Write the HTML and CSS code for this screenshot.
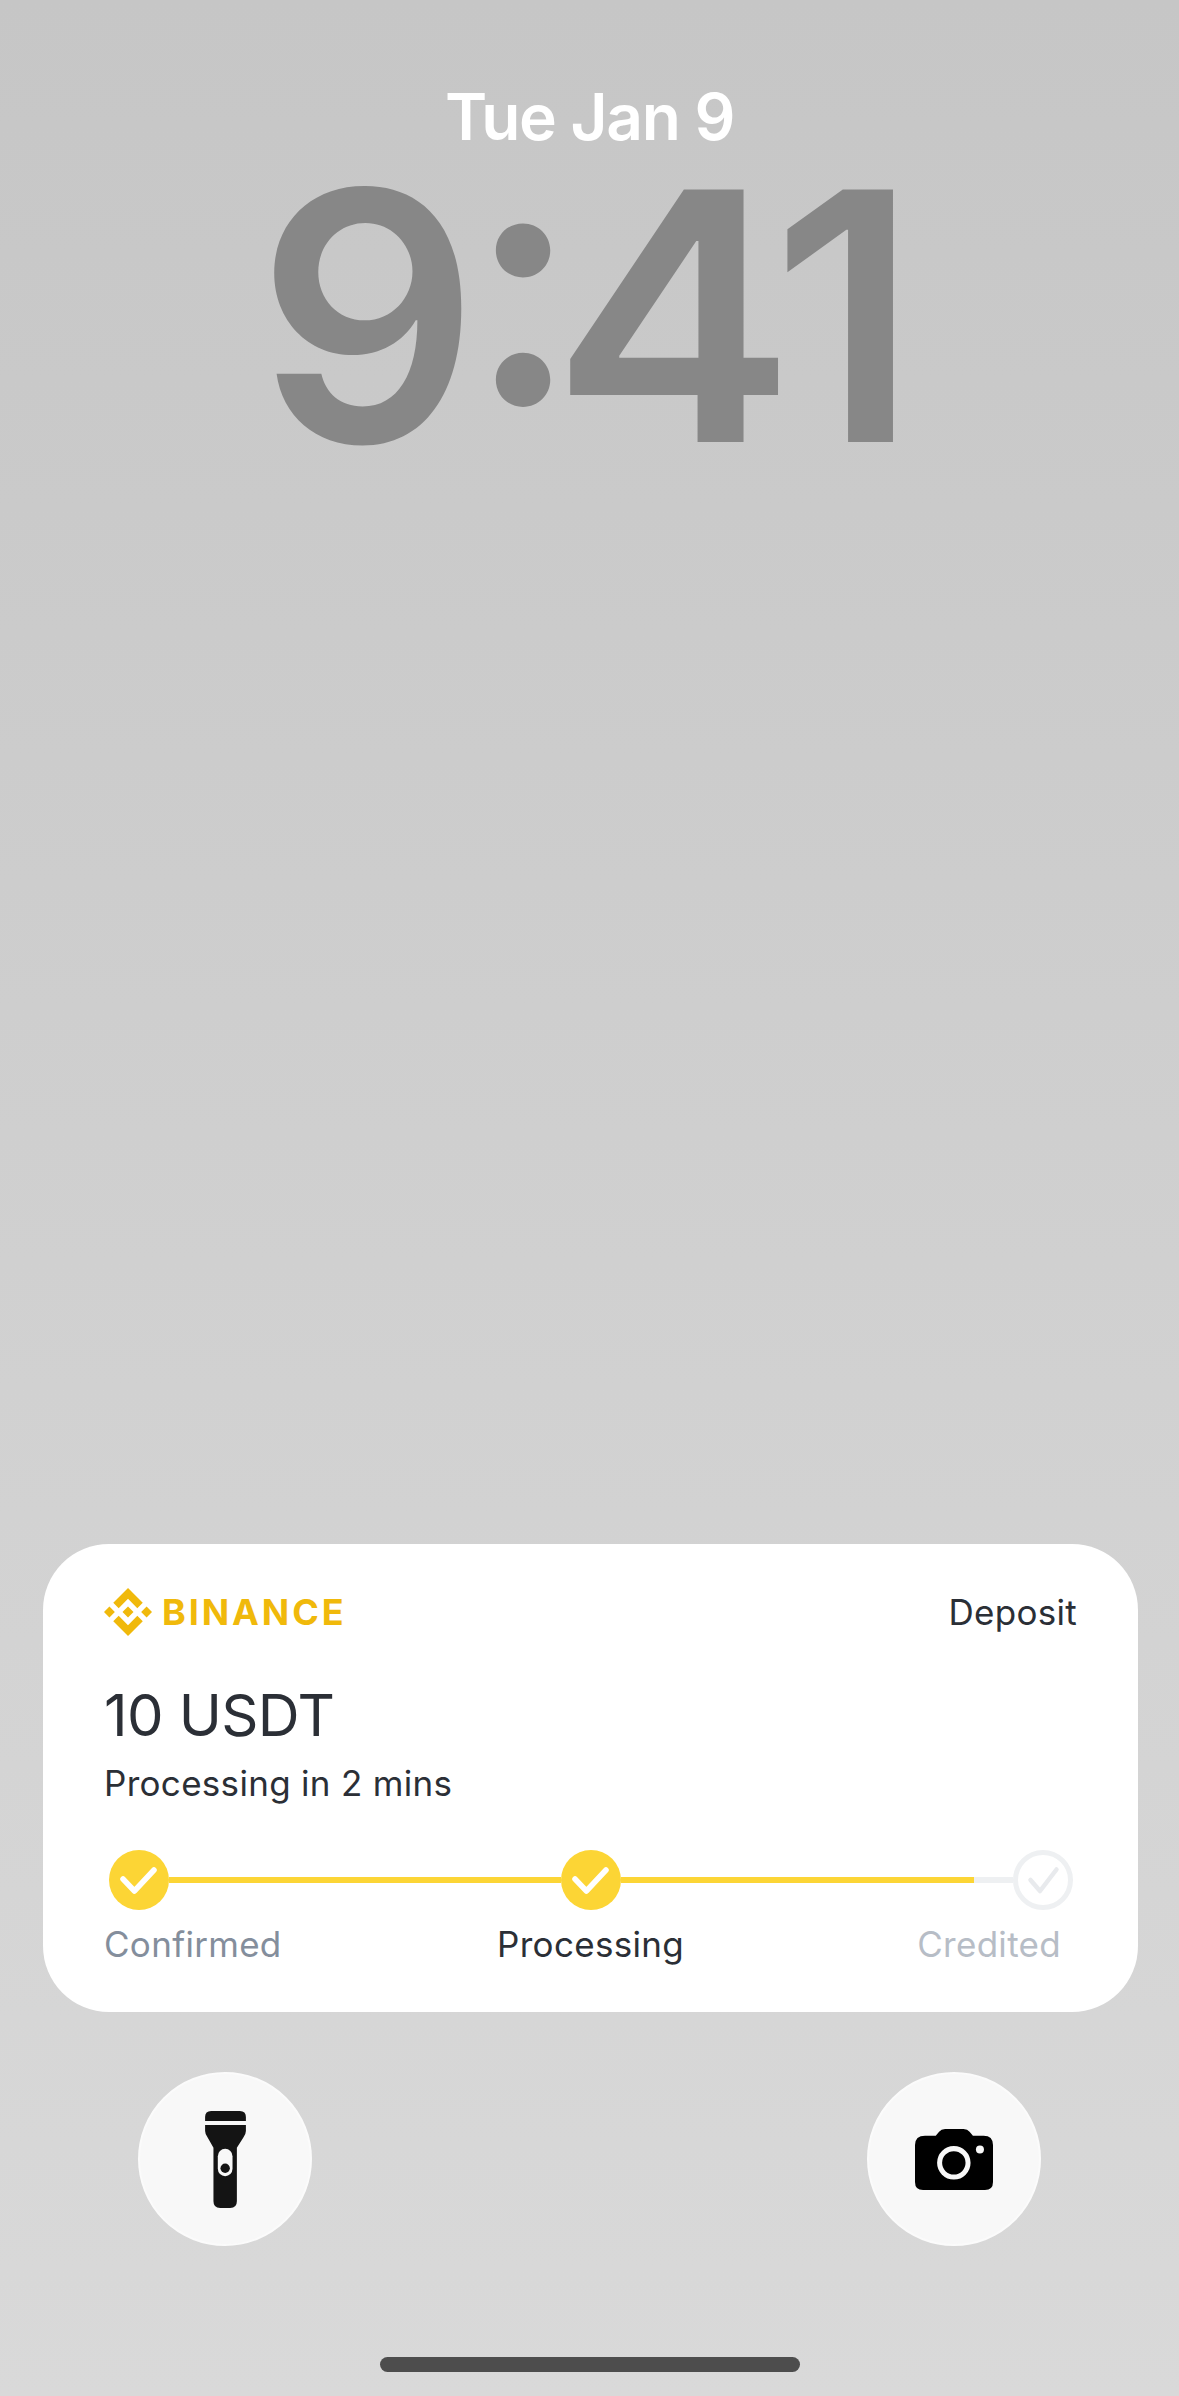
FILE: index.html
```html
<!DOCTYPE html>
<html lang="en">

<head>
    <meta charset="UTF-8">
    <meta name="viewport" content="width=device-width, initial-scale=1.0">
    <title>Lock Screen</title>
    <link rel="stylesheet" href="styles.css">
</head>

<body>
    <div class="screen">
        <div class="date">Tue Jan 9</div>
        <div class="time"><span class="time-hour">9</span><span class="time-colon">:</span><span class="time-four">4</span>1</div>

        <div class="card">
            <div class="card-head">
                <div class="brand">
                    <svg class="brand-icon" viewBox="0 0 126.61 126.61">
                        <path d="M38.73 53.2l24.59-24.58 24.6 24.6 14.3-14.31L63.32 0 24.42 38.9zM0 63.31l14.3-14.31 14.31 14.31-14.31 14.3zM38.73 73.41l24.59 24.59 24.6-24.6 14.31 14.29-38.9 38.91-38.91-38.88-.02-.02zM98.01 63.31l14.3-14.31 14.31 14.3-14.31 14.32z"/>
                        <path d="M77.83 63.3L63.32 48.78 52.59 59.51l-1.24 1.23-2.54 2.54 14.51 14.5 14.51-14.5z"/>
                    </svg>
                    <span class="brand-name">BINANCE</span>
                </div>
                <span class="card-type">Deposit</span>
            </div>
            <div class="amount">10 USDT</div>
            <div class="eta">Processing in 2 mins</div>

            <div class="track">
                <svg class="step" viewBox="0 0 60 60">
                    <circle cx="30" cy="30" r="30" fill="#fcd535"/>
                    <path d="M14 29 25.4 41 45 20" fill="none" stroke="#fff" stroke-width="5.5" stroke-linecap="round" stroke-linejoin="round"/>
                </svg>
                <div class="segment"></div>
                <svg class="step" viewBox="0 0 60 60">
                    <circle cx="30" cy="30" r="30" fill="#fcd535"/>
                    <path d="M14 29 25.4 41 45 20" fill="none" stroke="#fff" stroke-width="5.5" stroke-linecap="round" stroke-linejoin="round"/>
                </svg>
                <div class="segment segment-partial">
                    <div class="segment-fill"></div>
                </div>
                <svg class="step" viewBox="0 0 60 60">
                    <circle cx="30" cy="30" r="27.5" fill="#fff" stroke="#eef0f2" stroke-width="5"/>
                    <path d="M17.5 30 27 41 43.5 19.500" fill="none" stroke="#e8eaed" stroke-width="4.500" stroke-linecap="round" stroke-linejoin="round"/>
                </svg>
            </div>
            <div class="labels">
                <span class="label label-done">Confirmed</span>
                <span class="label label-active">Processing</span>
                <span class="label label-todo">Credited</span>
            </div>
        </div>

        <div class="actions">
            <div class="action">
                <svg class="icon-torch" viewBox="0 0 122 290">
                    <path d="M0 30V18Q0 0 18 0H104Q122 0 122 18V30Z"/>
                    <path d="M0 42H122V60Q122 70 114 80L95 110V270Q95 290 75 290H45Q25 290 25 270V110L8 80Q0 70 0 60Z"/>
                    <rect x="38" y="113" width="44" height="82" rx="22" fill="#f8f8f8"/>
                    <circle cx="60" cy="171" r="14"/>
                </svg>
            </div>
            <div class="action">
                <svg class="icon-camera" viewBox="0 0 233 182">
                    <path d="M30 20H62L72 8Q78 0 90 0H145Q157 0 163 8L173 20H205Q233 20 233 48V158Q233 182 209 182H24Q0 182 0 158V48Q0 20 30 20Z"/>
                    <circle cx="116" cy="101" r="42.500" fill="none" stroke="#f8f8f8" stroke-width="15"/>
                    <circle cx="194" cy="61" r="12" fill="#f8f8f8"/>
                </svg>
            </div>
        </div>

        <div class="home-bar"></div>
    </div>
</body>

</html>
```

FILE: styles.css
```css
* {
    margin: 0;
    padding: 0;
    box-sizing: border-box;
}

body {
    font-family: "Inter", "Liberation Sans", sans-serif;
}

.screen {
    width: 1179px;
    height: 2396px;
    overflow: hidden;
    display: flex;
    flex-direction: column;
    background: linear-gradient(#c6c6c6, #d9d9d9);
}

.date {
    margin-top: 78px;
    height: 78px;
    line-height: 78px;
    text-align: center;
    font-size: 64px;
    font-weight: 600;
    letter-spacing: -1.3px;
    color: #fff;
}

.time {
    height: 320px;
    padding-right: 22px;
    line-height: 320px;
    text-align: center;
    font-size: 347px;
    font-weight: 600;
    letter-spacing: -18px;
    color: #878787;
}

.time-hour {
    letter-spacing: -11px;
}

/* the lock screen colon sits higher than the font's */
.time-colon {
    letter-spacing: -27px;
    line-height: 0;
    vertical-align: 38px;
}

.time-four {
    display: inline-block;
    margin-right: 7px;
    transform: scaleX(1.06);
    transform-origin: left;
}

.card {
    margin: 0 41px 0 43px;
    margin-top: auto;
    height: 468px;
    padding: 40px 61px 0 61px;
    background: #fff;
    border-radius: 66px;
    color: #2b2f36;
}

.card-head {
    display: flex;
    justify-content: space-between;
    align-items: center;
    height: 56px;
}

.brand {
    display: flex;
    align-items: center;
    gap: 10px;
}

.brand-icon {
    width: 48px;
    height: 48px;
    fill: #f0b90b;
}

.brand-name {
    font-size: 36px;
    font-weight: 700;
    letter-spacing: 2.9px;
    color: #f0b90b;
}

.card-type {
    font-size: 35px;
    letter-spacing: .3px;
}

.amount {
    margin-top: 40px;
    font-size: 58px;
    letter-spacing: -.6px;
    line-height: 70px;
}

.eta {
    margin-top: 11px;
    font-size: 35px;
    letter-spacing: .3px;
    line-height: 44px;
}

.track {
    display: flex;
    align-items: center;
    margin: 45px 4px 0 5px;
}

.step {
    flex: none;
    width: 60px;
    height: 60px;
}

.segment {
    flex: 1;
    height: 6px;
    background: #fcd535;
}

.segment-partial {
    background: #eef0f2;
}

.segment-fill {
    height: 100%;
    width: 90%;
    background: #fcd535;
}

.labels {
    display: grid;
    grid-template-columns: 1fr auto 1fr;
    margin-top: 12px;
}

.label {
    font-size: 35px;
    letter-spacing: .3px;
    line-height: 44px;
}

.label-done {
    color: #848e9c;
}

.label-active {
    color: #2b2f36;
}

.label-todo {
    justify-self: end;
    margin-right: 16px;
    color: #b7bdc6;
}

.actions {
    display: flex;
    justify-content: space-between;
    margin-top: 60px;
    padding: 0 138px;
}

.action {
    width: 174px;
    height: 174px;
    display: flex;
    align-items: center;
    justify-content: center;
    border: 2px solid #fbfbfb;
    border-radius: 50%;
    background: #f8f8f8;
}

.icon-torch {
    width: 41px;
    height: 97px;
    fill: #141414;
}

.icon-camera {
    width: 78px;
    height: 61px;
    fill: #000;
}

.home-bar {
    width: 420px;
    height: 15px;
    margin: 111px auto 24px;
    border-radius: 8px;
    background: #4d4d4d;
}
```
